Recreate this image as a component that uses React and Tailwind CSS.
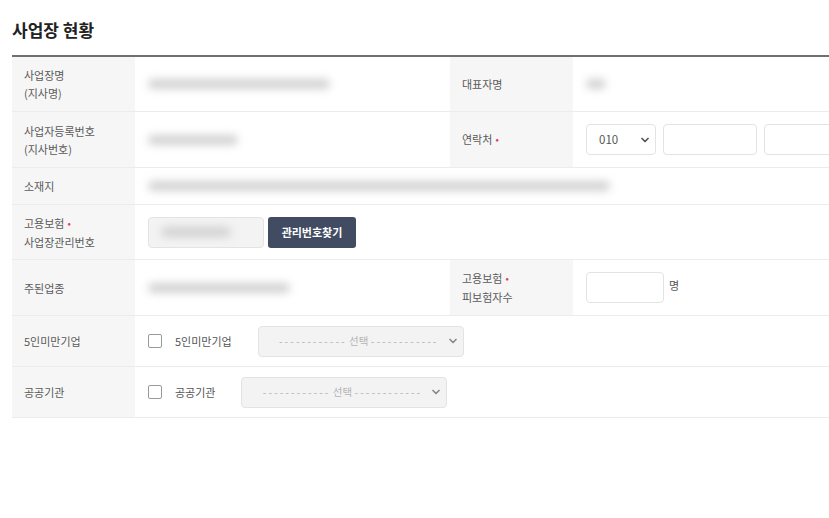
import React from 'react';

const font = { fontFamily: '"Noto Sans CJK KR", "Noto Sans", sans-serif' };

const Chevron = ({ className = '' }) => (
  <svg width="8" height="6" viewBox="0 0 8 6" className={className}>
    <path d="M1 1.5l3 3 3-3" fill="none" stroke="currentColor" strokeWidth="1.7" strokeLinecap="round" strokeLinejoin="round" />
  </svg>
);

const Blur = ({ w }) => (
  <div className={`${w} h-[10px] rounded-full bg-[#d2d2d2] blur-[4px]`} />
);

const Req = () => <span className="text-[#e0405a] ml-[3px] text-[10px] relative -top-[1px]">•</span>;

const Label = ({ children, className = '' }) => (
  <div className={`bg-[#f6f6f6] flex items-center px-3 text-[11px] leading-[18px] text-[#5a5a5a] ${className}`}>
    <div>{children}</div>
  </div>
);

const Cell = ({ children, className = '' }) => (
  <div className={`flex items-center px-[13px] ${className}`}>{children}</div>
);

const Check = ({ label }) => (
  <div className="flex items-center">
    <div className="w-[14px] h-[14px] border border-[#9a9a9a] rounded-[2px] bg-white" />
    <span className="ml-[13px] text-[11px] text-[#555]">{label}</span>
  </div>
);

const Select = ({ w }) => (
  <div className={`${w} h-[31px] rounded-[4px] border border-[#e3e3e3] bg-[#f3f3f3] flex items-center justify-between pl-[10px] pr-[6px]`}>
    <span className="flex-1 text-center text-[10.5px] text-[#b4b4b4] whitespace-nowrap">
      <span className="tracking-[2px]">------------</span> 선택 <span className="tracking-[2px]">------------</span>
    </span>
    <Chevron className="text-[#8a8a8a]" />
  </div>
);

export default function App() {
  return (
    <div className="w-full h-[518px] overflow-hidden bg-white" style={font}>
      <div className="pl-3 w-[900px]">
        <h2 className="pt-[19px] pb-[14px] text-[17px] font-bold text-[#222] leading-[22px]">사업장 현황</h2>
        <div className="border-t-2 border-[#6f6f6f] grid grid-cols-[123px_315px_123px_1fr]">
          {/* row 1 */}
          <Label className="h-[55px] border-b border-[#ececec]">사업장명<br />(지사명)</Label>
          <Cell className="border-b border-[#ececec]"><Blur w="w-[182px]" /></Cell>
          <Label className="border-b border-[#ececec]">대표자명</Label>
          <Cell className="border-b border-[#ececec]"><Blur w="w-[20px]" /></Cell>

          {/* row 2 */}
          <Label className="h-[56px] border-b border-[#ececec]">사업자등록번호<br />(지사번호)</Label>
          <Cell className="border-b border-[#ececec]"><Blur w="w-[90px]" /></Cell>
          <Label className="border-b border-[#ececec]">연락처<Req /></Label>
          <Cell className="border-b border-[#ececec] gap-[7px]">
            <div className="w-[70px] h-[31px] rounded-[4px] border border-[#e3e3e3] bg-white flex items-center justify-between pl-[12px] pr-[6px]">
              <span className="text-[11.5px] text-[#555]">010</span>
              <Chevron className="text-[#555]" />
            </div>
            <div className="w-[94px] h-[31px] rounded-[4px] border border-[#e3e3e3] bg-white" />
            <div className="w-[94px] h-[31px] rounded-[4px] border border-[#e3e3e3] bg-white" />
          </Cell>

          {/* row 3 */}
          <Label className="h-[37px] border-b border-[#ececec]">소재지</Label>
          <Cell className="col-span-3 border-b border-[#ececec]"><Blur w="w-[462px]" /></Cell>

          {/* row 4 */}
          <Label className="h-[55px] border-b border-[#ececec]">고용보험<Req /><br />사업장관리번호</Label>
          <Cell className="col-span-3 border-b border-[#ececec] gap-[4px]">
            <div className="w-[116px] h-[31px] rounded-[4px] border border-[#e3e3e3] bg-[#f3f3f3] flex items-center pl-[12px]">
              <Blur w="w-[70px]" />
            </div>
            <button className="w-[88px] h-[31px] rounded-[3px] bg-[#414c63] text-white text-[11px] font-bold">관리번호찾기</button>
          </Cell>

          {/* row 5 */}
          <Label className="h-[56px] border-b border-[#ececec]">주된업종</Label>
          <Cell className="border-b border-[#ececec]"><Blur w="w-[142px]" /></Cell>
          <Label className="border-b border-[#ececec]">고용보험<Req /><br />피보험자수</Label>
          <Cell className="border-b border-[#ececec]">
            <div className="w-[78px] h-[31px] rounded-[4px] border border-[#e3e3e3] bg-white" />
            <span className="ml-[5px] text-[11px] text-[#555] -mt-[4px]">명</span>
          </Cell>

          {/* row 6 */}
          <Label className="h-[51px] border-b border-[#ececec]">5인미만기업</Label>
          <Cell className="col-span-3 border-b border-[#ececec] gap-[26px]">
            <Check label="5인미만기업" />
            <Select w="w-[206px]" />
          </Cell>

          {/* row 7 */}
          <Label className="h-[51px] border-b border-[#ececec]">공공기관</Label>
          <Cell className="col-span-3 border-b border-[#ececec] gap-[26px]">
            <Check label="공공기관" />
            <Select w="w-[206px]" />
          </Cell>
        </div>
      </div>
    </div>
  );
}
